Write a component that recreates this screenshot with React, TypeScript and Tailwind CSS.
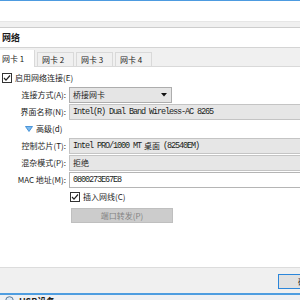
import React from 'react';

const Check: React.FC = () => (
  <svg width="10" height="10" viewBox="0 0 10 10" className="shrink-0">
    <rect x="0.5" y="0.5" width="9" height="9" fill="#fff" stroke="#333" />
    <path d="M2 5 L4 7.2 L8 2.5" fill="none" stroke="#222" strokeWidth="1.2" />
  </svg>
);

const tabs = ['网卡 1', '网卡 2', '网卡 3', '网卡 4'];

const mono = "font-['Liberation_Mono','Noto_Sans_CJK_SC',monospace] text-[8.5px] tracking-[-1.1px]";

const Label: React.FC<{ text: string }> = ({ text }) => (
  <div className="w-[68px] shrink-0 pr-[2px] text-right">{text}</div>
);

const App: React.FC = () => {
  return (
    <div className="w-[300px] h-[300px] overflow-hidden bg-white flex flex-col font-['Noto_Sans_CJK_SC',sans-serif] text-[8px] text-[#1c1c1c] leading-none">
      <div className="h-px shrink-0 bg-[#4d9be0]" />
      <div className="h-[20px] shrink-0" />
      <div className="h-[7px] shrink-0 bg-[#f0f0f0] border-t border-[#e6e6e6] border-b border-b-[#cdcdcd]" />
      <div className="h-[19px] shrink-0 flex items-center pl-[2px] font-bold text-[9px]">网络</div>

      {/* tab strip */}
      <div className="h-[20px] shrink-0 flex items-end gap-[2px] bg-[#f0f0f0] border-t border-[#d4d4d4] border-b border-b-[#d9d9d9]">
        {tabs.map((t, i) =>
          i === 0 ? (
            <div key={t} className="w-[35px] h-[17px] -mb-px bg-white border-r border-[#d9d9d9] flex items-center pl-[2px]">
              {t}
            </div>
          ) : (
            <div key={t} className="w-[37px] h-[14px] bg-[#f0f0f0] border border-b-0 border-[#d9d9d9] flex items-center pl-[4px]">
              {t}
            </div>
          )
        )}
      </div>

      {/* content */}
      <div className="flex-1 flex flex-col gap-[1px] pt-[3px]">
        <div className="h-[16px] flex items-center gap-[3px] pl-[2px]">
          <Check />
          <span>启用网络连接(E)</span>
        </div>

        <div className="h-[16px] flex items-center">
          <Label text="连接方式(A):" />
          <div className="w-[103px] h-[16px] ml-[1px] bg-[#e5e5e5] border border-[#adadad] flex items-center justify-between pl-[3px] pr-[4px]">
            <span>桥接网卡</span>
            <svg width="6" height="4" viewBox="0 0 6 4">
              <path d="M0 0 H6 L3 3.5 Z" fill="#111" />
            </svg>
          </div>
        </div>

        <div className="h-[16px] flex items-center">
          <Label text="界面名称(N):" />
          <div className={`flex-1 h-[16px] ml-[1px] -mr-[4px] bg-[#e6e6e6] border border-[#c4c4c4] flex items-center pl-[3px] whitespace-nowrap ${mono}`}>
            Intel(R) Dual Band Wireless-AC 8265
          </div>
        </div>

        <div className="h-[16px] flex items-center pl-[25px] gap-[3px]">
          <svg width="8" height="6" viewBox="0 0 8 6">
            <path d="M0.5 0.5 H7.5 L4 5.5 Z" fill="#7dbbef" stroke="#2f83d0" strokeWidth="0.8" />
          </svg>
          <span>高级(d)</span>
        </div>

        <div className="h-[16px] flex items-center">
          <Label text="控制芯片(T):" />
          <div className={`flex-1 h-[16px] ml-[1px] -mr-[4px] bg-[#e6e6e6] border border-[#c4c4c4] flex items-center pl-[3px] whitespace-nowrap ${mono}`}>
            Intel PRO/1000 MT <span className="font-['Noto_Sans_CJK_SC',sans-serif] text-[8px] tracking-normal mx-[3px]">桌面</span>(82540EM)
          </div>
        </div>

        <div className="h-[16px] flex items-center">
          <Label text="混杂模式(P):" />
          <div className="flex-1 h-[16px] ml-[1px] -mr-[4px] bg-[#e6e6e6] border border-[#c4c4c4] flex items-center pl-[3px]">
            拒绝
          </div>
        </div>

        <div className="h-[16px] flex items-center">
          <Label text="MAC 地址(M):" />
          <div className={`flex-1 h-[16px] ml-[1px] -mr-[4px] bg-white border border-[#b5b5b5] flex items-center pl-[3px] ${mono}`}>
            0800273E67E8
          </div>
        </div>

        <div className="h-[16px] flex items-center gap-[3px] pl-[70px]">
          <Check />
          <span>插入网线(C)</span>
        </div>

        <div className="pl-[71px] mt-[2px]">
          <div className="w-[102px] h-[15px] bg-[#cccccc] border border-[#bfbfbf] flex items-center justify-center text-[#838383]">
            端口转发(P)
          </div>
        </div>
      </div>

      {/* footer */}
      <div className="h-[26px] shrink-0 bg-[#f0f0f0] border-t border-[#dcdcdc] pt-[6px] pl-[278px]">
        <div className="w-[60px] h-[15px] bg-[#e1e1e1] border border-[#2b86da] flex items-center pl-[19px]">确定</div>
      </div>
      <div className="h-[2px] shrink-0 bg-[#4e9de0]" />
      <div className="h-[5px] shrink-0 bg-[#eef0f3] flex items-start pl-[5px] gap-[5px] overflow-hidden">
        <svg width="9" height="9" viewBox="0 0 9 9" className="mt-[1px]">
          <circle cx="4.5" cy="4.5" r="3.8" fill="#dbe8f5" stroke="#5d7b99" />
        </svg>
        <span className="font-bold text-[9px] mt-[2px]">USB设备</span>
      </div>
    </div>
  );
};

export default App;
